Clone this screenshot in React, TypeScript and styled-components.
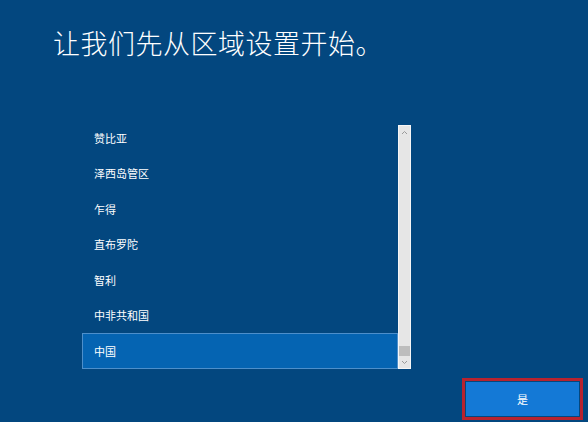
import React from 'react'
import styled, { createGlobalStyle } from 'styled-components'

const regions = ['赞比亚', '泽西岛管区', '乍得', '直布罗陀', '智利', '中非共和国', '中国']
const selected = '中国'

const Global = createGlobalStyle`
  html, body {
    margin: 0;
    padding: 0;
    background: #03477f;
  }
  body {
    font-family: "Noto Sans CJK SC", "Noto Sans", sans-serif;
  }
`

const Page = styled.div`
  width: 588px;
  height: 422px;
  background: #03477f;
  display: flex;
  flex-direction: column;
  overflow: hidden;
`

const Title = styled.h1`
  margin: 0;
  padding: 25px 0 0 53px;
  font-size: 27px;
  line-height: 35px;
  font-weight: 300;
  color: #ffffff;
  letter-spacing: 0.5px;
`

const ListBox = styled.div`
  margin: 60px 0 0 82px;
  width: 329px;
  height: 249px;
  display: flex;
`

const Items = styled.div`
  flex: 1;
  display: flex;
  flex-direction: column;
`

const Item = styled.div<{ $active?: boolean }>`
  height: 35.5px;
  box-sizing: border-box;
  display: flex;
  align-items: center;
  padding-left: 11px;
  font-size: 11px;
  color: #ffffff;
  background: ${p => (p.$active ? '#0564b2' : 'transparent')};
  border: 1px solid ${p => (p.$active ? '#4d8fcb' : 'transparent')};
`

const Scrollbar = styled.div`
  width: 13px;
  margin-top: 5px;
  box-sizing: border-box;
  background: #e6e6e6;
  border: 1px solid #f6f6f6;
  display: flex;
  flex-direction: column;
  align-items: center;
`

const Arrow = styled.div`
  height: 12px;
  display: flex;
  align-items: center;
  justify-content: center;
`

const Track = styled.div`
  flex: 1;
  width: 100%;
  display: flex;
  flex-direction: column;
  justify-content: flex-end;
`

const Thumb = styled.div`
  height: 10px;
  background: #bdbdbd;
`

const Footer = styled.div`
  display: flex;
  justify-content: flex-end;
  padding: 9px 5px 0 0;
`

const Focus = styled.div`
  border: 3px solid #b8232f;
  padding: 1px;
`

const Button = styled.button`
  width: 113px;
  height: 34px;
  border: none;
  background: #1479d6;
  color: #ffffff;
  font-family: "Noto Sans CJK SC", sans-serif;
  font-size: 11px;
  padding: 0;
`

function Chevron({ up }: { up?: boolean }) {
  return (
    <svg width="7" height="5" viewBox="0 0 7 5">
      <path
        d={up ? 'M1 4 L3.5 1.5 L6 4' : 'M1 1 L3.5 3.5 L6 1'}
        fill="none"
        stroke="#9a9a9a"
        strokeWidth="1"
      />
    </svg>
  )
}

export default function App() {
  return (
    <Page>
      <Global />
      <Title>让我们先从区域设置开始。</Title>
      <ListBox>
        <Items>
          {regions.map(name => (
            <Item key={name} $active={name === selected}>
              {name}
            </Item>
          ))}
        </Items>
        <Scrollbar>
          <Arrow>
            <Chevron up />
          </Arrow>
          <Track>
            <Thumb />
          </Track>
          <Arrow>
            <Chevron />
          </Arrow>
        </Scrollbar>
      </ListBox>
      <Footer>
        <Focus>
          <Button>是</Button>
        </Focus>
      </Footer>
    </Page>
  )
}
